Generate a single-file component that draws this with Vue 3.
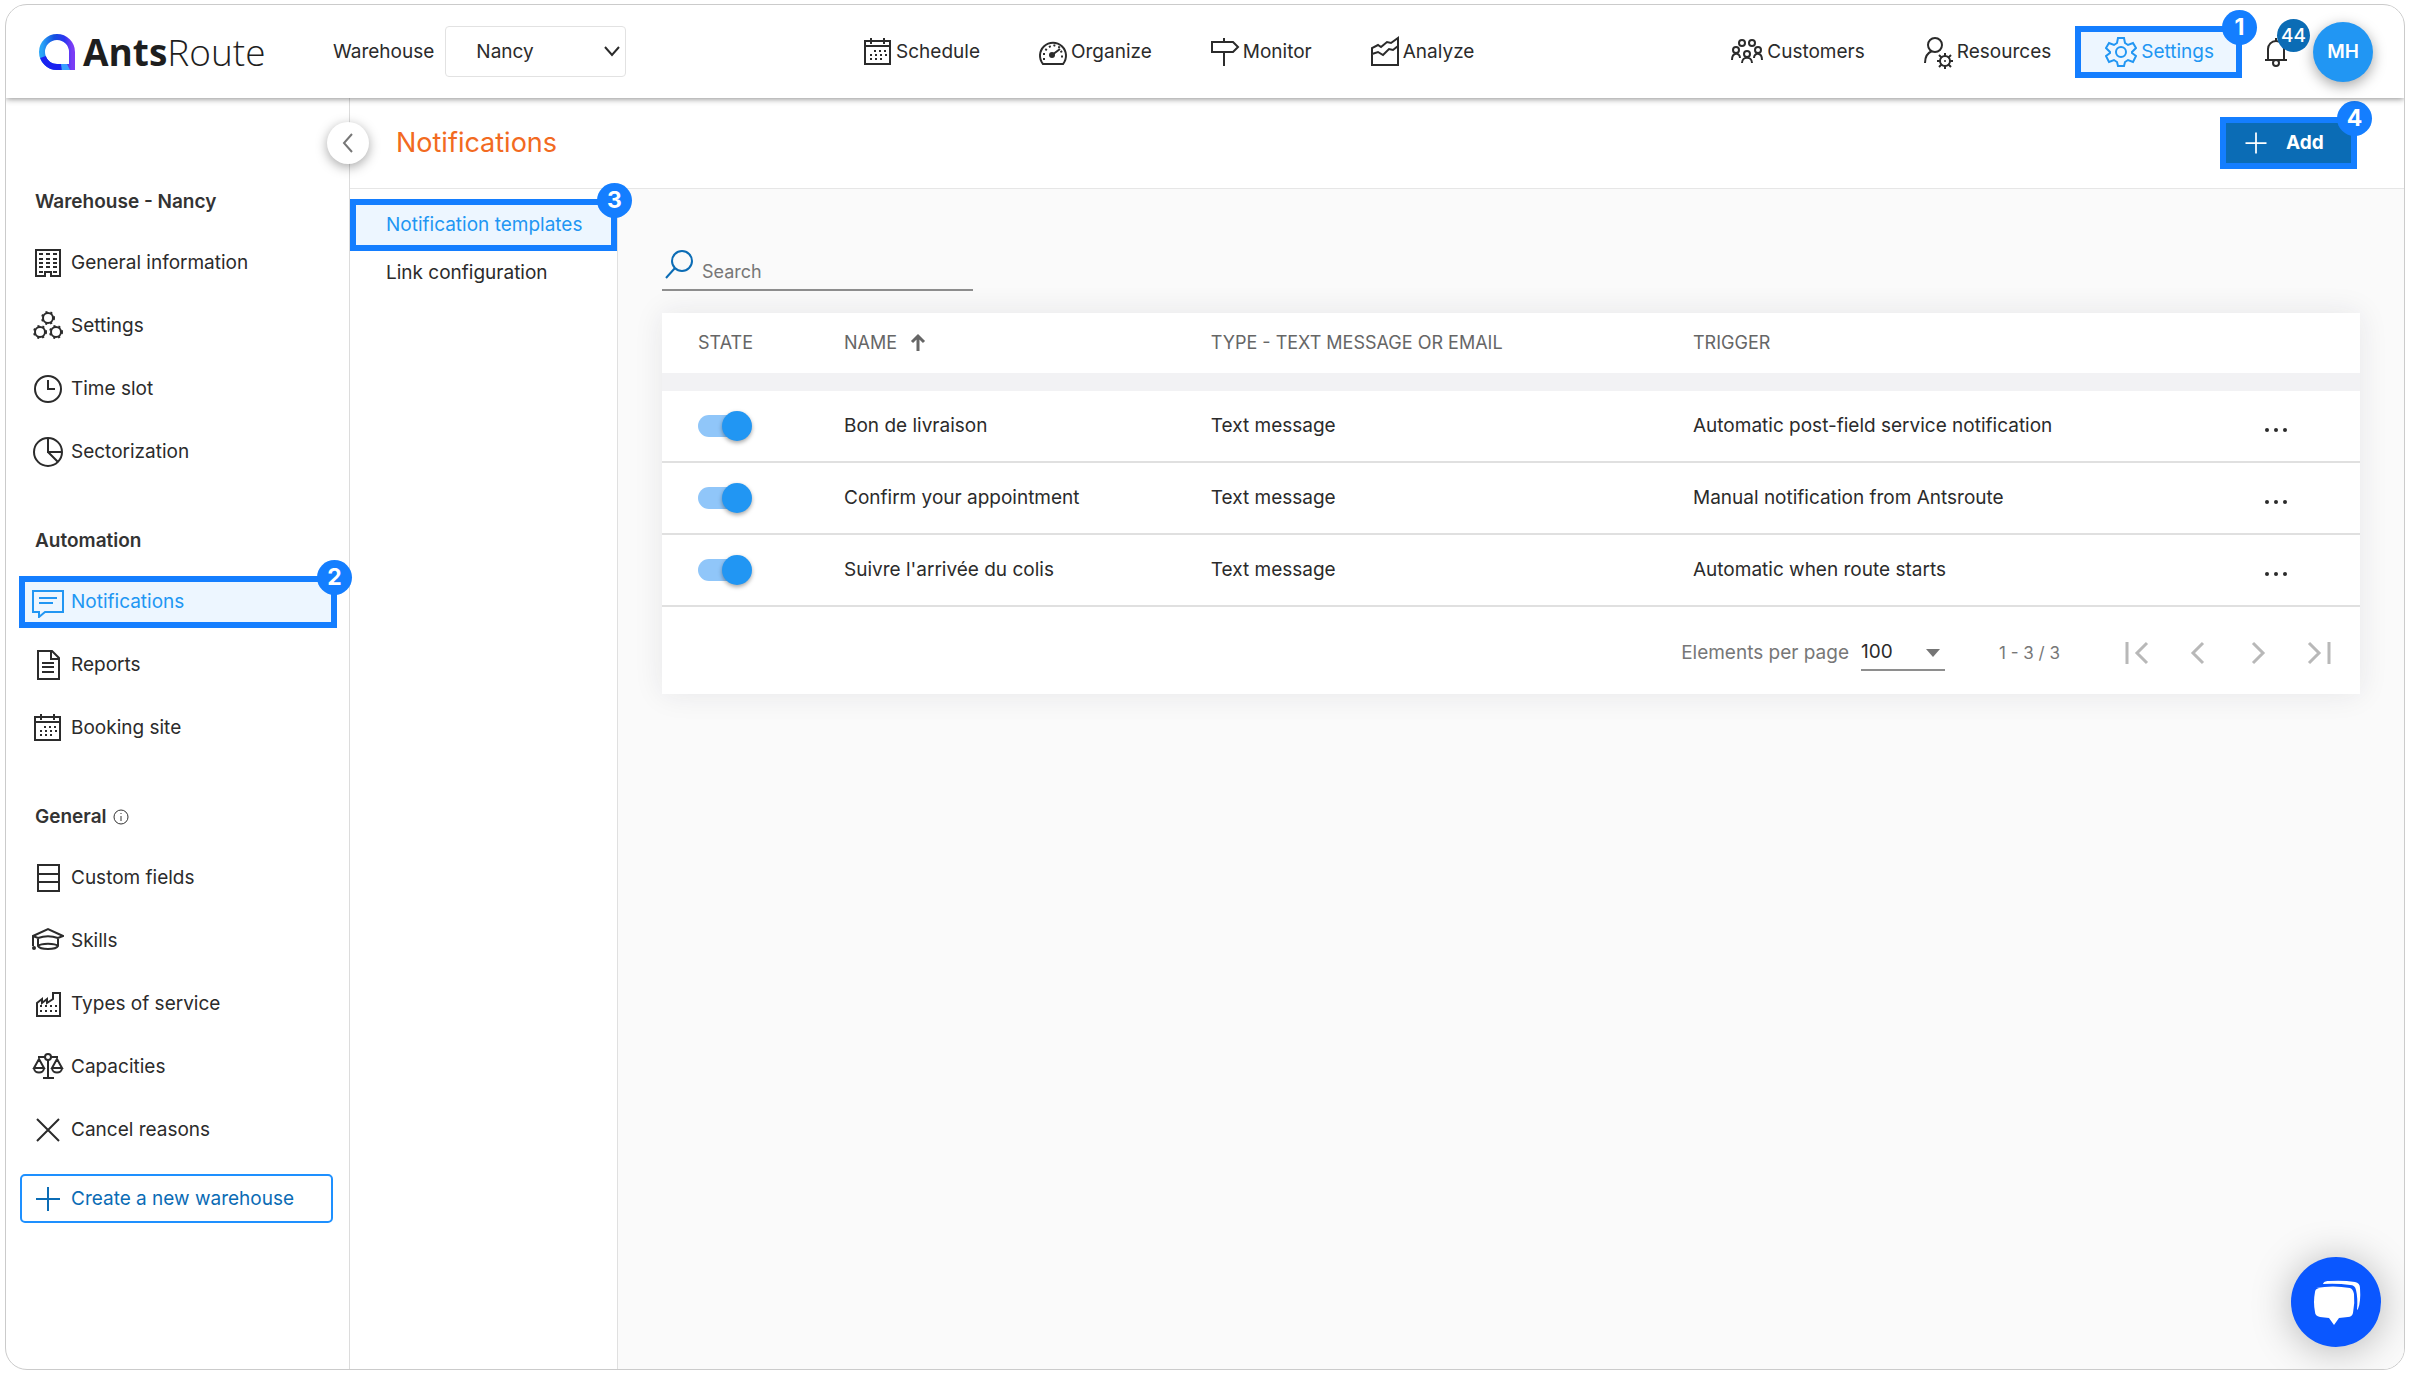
<script setup>
import { ref } from 'vue'

const icons = {
  calendar: '<path d="M3 5h25v23H3zM3 10h25M9 2v6M22 2v6"/><path class="dots" d="M12 15h15M8 19h19M8 23h14"/>',
  gauge: '<path d="M6 28a13 13 0 1 1 20 0zM15 19l8-6"/><circle class="solid" cx="15" cy="19" r="3"/><path class="dots" d="M7 24v-7l3-5 6-3 6 2 3 6v7"/>',
  sign: '<path d="M3 6h21l5 5-5 5H3zM15 2v4M15 16v14"/>',
  chart: '<path d="M3 29V12l6-3 3 2 6-5 4 1 7-5v27zM3 18l6-2 5 3 6-6 4 1 5-4"/>',
  people: '<circle cx="11" cy="7" r="3"/><circle cx="21" cy="7" r="3"/><circle cx="5" cy="14" r="3"/><circle cx="27" cy="14" r="3"/><circle cx="16" cy="18" r="3"/><path d="M1 24c0-8 8-8 8-2M23 22c0-6 8-6 8 2M11 27c0-7 10-7 10 0"/>',
  resource: '<circle cx="12" cy="9" r="7"/><path d="M9 15c-5 2-7 6-7 12"/><circle cx="22" cy="25" r="5"/><path d="M22 17v3M22 30v3M14 25h3M27 25h3M16 19l3 3M25 28l3 3M28 19l-3 3M19 28l-3 3"/><circle class="solid" cx="22" cy="25" r="1"/>',
  gear: '<circle cx="16" cy="16" r="5"/><path d="M13 2h6l1 5 3 2 5-2 3 5-4 4v1l4 3-3 6-5-2-3 2-1 4h-6l-1-4-3-2-5 2-3-6 4-3v-1l-4-4 3-5 5 2 3-2z"/>',
  building: '<path d="M4 3h24v26h-9v-4h-6v4H4z"/><path class="windows" d="M7 7h18M7 12h18M7 16h18M7 20h18M7 25h18"/>',
  gears: '<circle cx="16" cy="8" r="5"/><circle cx="8" cy="22" r="5"/><circle cx="24" cy="22" r="5"/><circle class="cog" cx="16" cy="8" r="6"/><circle class="cog" cx="8" cy="22" r="6"/><circle class="cog" cx="24" cy="22" r="6"/>',
  clock: '<circle cx="16" cy="16" r="13"/><path d="M16 7v9h7"/>',
  pie: '<circle cx="16" cy="16" r="14"/><path d="M16 2v14h14M16 16l10 10"/>',
  message: '<path d="M1 5h30v21H13l-6 5v-5H1zM7 12h18M7 17h14"/>',
  report: '<path d="M6 2h14l7 7v21H6zM19 2v8h8M10 14h12M10 18h12M10 23h12"/>',
  rows: '<path d="M6 3h21v26H6zM6 12h21M6 20h21"/>',
  cap: '<path d="M1 11l15-7 15 7-5 2c-6-2-14-2-20 0zM6 13v8c2 4 18 4 20 0v-8M6 21c3-3 17-3 20 0M1 11v10"/><circle class="solid" cx="2" cy="23" r="2"/>',
  factory: '<path d="M5 28V15l5-4v4l5-4v4l6-4V5h7v23z"/><path class="dots" d="M8 18h19M8 23h19"/>',
  scales: '<path d="M6 6h20M16 6v21M11 27h11M7 8L2 17h10zM25 8l-5 9h10zM2 17c0 6 10 6 10 0M20 17c0 6 10 6 10 0"/><circle class="hole" cx="16" cy="6" r="3"/>',
  cross: '<path d="M5 5l22 22M27 5L5 27"/>',
  plus: '<path d="M16 4v24M4 16h24"/>'
}

const warehouses = ['Nancy']
const warehouse = ref('Nancy')
const perPage = ref('100')
const search = ref('')

const mainNav = [
  { icon: 'calendar', label: 'Schedule' },
  { icon: 'gauge', label: 'Organize' },
  { icon: 'sign', label: 'Monitor' },
  { icon: 'chart', label: 'Analyze' }
]

const sections = [
  {
    title: 'Warehouse - Nancy',
    items: [
      { icon: 'building', label: 'General information' },
      { icon: 'gears', label: 'Settings' },
      { icon: 'clock', label: 'Time slot' },
      { icon: 'pie', label: 'Sectorization' }
    ]
  },
  {
    title: 'Automation',
    items: [
      { icon: 'message', label: 'Notifications', step: 2 },
      { icon: 'report', label: 'Reports' },
      { icon: 'calendar', label: 'Booking site' }
    ]
  },
  {
    title: 'General',
    info: true,
    items: [
      { icon: 'rows', label: 'Custom fields' },
      { icon: 'cap', label: 'Skills' },
      { icon: 'factory', label: 'Types of service' },
      { icon: 'scales', label: 'Capacities' },
      { icon: 'cross', label: 'Cancel reasons' }
    ]
  }
]

const rows = ref([
  { on: true, name: 'Bon de livraison', type: 'Text message', trigger: 'Automatic post-field service notification' },
  { on: true, name: 'Confirm your appointment', type: 'Text message', trigger: 'Manual notification from Antsroute' },
  { on: true, name: "Suivre l'arrivée du colis", type: 'Text message', trigger: 'Automatic when route starts' }
])

const pagerButtons = [
  { label: 'First page', path: 'M5 5v22M25 6L15 16l10 10' },
  { label: 'Previous page', path: 'M21 6L11 16l10 10' },
  { label: 'Next page', path: 'M11 6l10 10-10 10' },
  { label: 'Last page', path: 'M7 6l10 10L7 26M27 5v22' }
]
</script>

<template>
  <div class="frame">
    <header class="topbar">
      <div class="left">
        <a href="#" class="brand" aria-label="AntsRoute">
          <svg width="38" height="38" viewBox="0 0 38 38">
            <defs>
              <linearGradient id="ring" x1="0" y1="0" x2="1" y2="0">
                <stop offset="0" stop-color="#2ba6f7" />
                <stop offset=".4" stop-color="#1450e0" />
                <stop offset=".75" stop-color="#2a35f0" />
                <stop offset="1" stop-color="#7a3cf5" />
              </linearGradient>
            </defs>
            <path d="M34 34H19A15 15 0 1 1 34 19z" fill="none" stroke="url(#ring)" stroke-width="6" />
            <path d="M5 24a15 15 0 0 0 14 10h4" fill="none" stroke="#1a22f0" stroke-width="6" />
            <path d="M23 31h6l3 6h-8z" fill="#3aa0ff" stroke="none" />
          </svg>
          <span class="word"><b>Ants</b>Route</span>
        </a>
        <label for="warehouse">Warehouse</label>
        <span class="picker">
          <select id="warehouse" v-model="warehouse">
            <option v-for="w in warehouses" :key="w">{{ w }}</option>
          </select>
          <svg width="16" height="16" viewBox="0 0 16 16"><path d="M1 4l7 8 7-8" /></svg>
        </span>
      </div>

      <nav class="center">
        <a v-for="n in mainNav" :key="n.label" href="#" class="navlink">
          <svg class="icon" viewBox="0 0 32 32" v-html="icons[n.icon]"></svg>{{ n.label }}
        </a>
      </nav>

      <div class="right">
        <a href="#" class="navlink customers"><svg class="icon" viewBox="0 0 32 32" v-html="icons.people"></svg>Customers</a>
        <a href="#" class="navlink resources"><svg class="icon" viewBox="0 0 32 32" v-html="icons.resource"></svg>Resources</a>
        <a href="#" class="navlink settings marked">
          <svg class="icon" viewBox="0 0 32 32" v-html="icons.gear"></svg>Settings
          <span class="step">1</span>
        </a>
        <button class="bell" aria-label="Alerts">
          <svg width="24" height="32" viewBox="0 0 24 32">
            <path d="M1 24h22M4 24V13a8 8 0 0 1 16 0v11M12 2v3" />
            <circle cx="12" cy="27" r="3" />
          </svg>
          <span class="count">44</span>
        </button>
        <button class="avatar">MH</button>
      </div>
    </header>

    <div class="body">
      <aside class="sidebar">
        <button class="collapse" aria-label="Collapse menu">
          <svg width="12" height="20" viewBox="0 0 12 20"><path d="M10 1L2 10l8 9" /></svg>
        </button>
        <section v-for="s in sections" :key="s.title">
          <h2>
            {{ s.title }}
            <svg v-if="s.info" width="16" height="16" viewBox="0 0 16 16"><circle cx="8" cy="8" r="7" /><path d="M8 7v5M8 4v1" /></svg>
          </h2>
          <ul>
            <li v-for="i in s.items" :key="i.label">
              <a href="#" class="side" :class="{ marked: i.step }">
                <svg class="icon" viewBox="0 0 32 32" v-html="icons[i.icon]"></svg>{{ i.label }}
                <span v-if="i.step" class="step">{{ i.step }}</span>
              </a>
            </li>
          </ul>
        </section>
        <button class="create">
          <svg class="icon" viewBox="0 0 32 32" v-html="icons.plus"></svg>Create a new warehouse
        </button>
      </aside>

      <div class="content">
        <div class="titlebar">
          <h1>Notifications</h1>
          <button class="add marked">
            <svg class="icon" viewBox="0 0 32 32" v-html="icons.plus"></svg>Add
            <span class="step">4</span>
          </button>
        </div>

        <div class="panes">
          <nav class="subnav">
            <a href="#" class="sub marked">Notification templates<span class="step">3</span></a>
            <a href="#" class="sub">Link configuration</a>
          </nav>

          <main>
            <div class="search">
              <svg width="32" height="32" viewBox="0 0 32 32"><circle cx="20" cy="12" r="10" /><path d="M13 19L4 29" /></svg>
              <input v-model="search" type="text" placeholder="Search" aria-label="Search" />
            </div>

            <div class="card">
              <table>
                <thead>
                  <tr>
                    <th class="c-state">STATE</th>
                    <th class="c-name">
                      NAME
                      <svg width="16" height="18" viewBox="0 0 16 18"><path d="M8 18V3M2 9l6-6 6 6" /></svg>
                    </th>
                    <th class="c-type">TYPE - TEXT MESSAGE OR EMAIL</th>
                    <th>TRIGGER</th>
                    <th class="c-more"></th>
                  </tr>
                </thead>
                <tbody>
                  <tr v-for="r in rows" :key="r.name">
                    <td class="c-state"><input v-model="r.on" type="checkbox" class="switch" :aria-label="r.name" /></td>
                    <td>{{ r.name }}</td>
                    <td>{{ r.type }}</td>
                    <td>{{ r.trigger }}</td>
                    <td class="c-more">
                      <button class="more" aria-label="More actions">
                        <svg width="24" height="8" viewBox="0 0 24 8"><circle cx="3" cy="4" r="2" /><circle cx="12" cy="4" r="2" /><circle cx="21" cy="4" r="2" /></svg>
                      </button>
                    </td>
                  </tr>
                </tbody>
              </table>
              <div class="pager">
                <label for="perpage">Elements per page</label>
                <span class="perpage">
                  <select id="perpage" v-model="perPage">
                    <option>100</option>
                  </select>
                  <svg width="14" height="8" viewBox="0 0 14 8"><path d="M0 0h14L7 8z" /></svg>
                </span>
                <span class="range">1 - 3 / 3</span>
                <div class="steps">
                  <button v-for="b in pagerButtons" :key="b.label" :aria-label="b.label">
                    <svg width="32" height="32" viewBox="0 0 32 32"><path :d="b.path" /></svg>
                  </button>
                </div>
              </div>
            </div>
          </main>
        </div>
      </div>
    </div>

    <button class="chat" aria-label="Open chat">
      <svg width="50" height="48" viewBox="0 0 50 48">
        <path d="M5 10Q22 7 39 10Q42 11 43 16Q44 25 42 35Q41 39 37 39L28 40L23 47L18 40L9 39Q4 38 4 34Q2 24 4 14Q4 11 8 10z" />
        <path d="M12 6C13 3 16 3 18 3Q32 2 44 4Q49 5 49 10Q50 24 47 31L46 32Q47 20 45 12Q44 7 39 7Q26 5 12 6z" />
      </svg>
    </button>
  </div>
</template>

<style>
body {
  background: #fff;
}
</style>

<style scoped>
* {
  box-sizing: border-box;
}
.frame {
  position: relative;
  display: flex;
  flex-direction: column;
  min-height: calc(100vh - 8px);
  margin: 4px 4px 4px 5px;
  border: 1px solid #cbcbcb;
  border-radius: 22px;
  overflow: hidden;
  font: 19px/24px Inter, sans-serif;
  color: #2b2b2b;
}
button,
input,
select {
  font: inherit;
  color: inherit;
  margin: 0;
  padding: 0;
  border: 0;
  background: none;
}
select {
  appearance: none;
}
a {
  color: inherit;
  text-decoration: none;
}
svg {
  flex: none;
  fill: none;
  stroke: currentColor;
  stroke-width: 2;
}
.icon {
  width: 32px;
  height: 32px;
}
.icon :deep(.dots) {
  stroke-dasharray: 2 3;
}
.icon :deep(.windows) {
  stroke-dasharray: 4 3;
}
.icon :deep(.cog) {
  stroke-dasharray: 2 3;
}
.icon :deep(.solid) {
  fill: currentColor;
  stroke: none;
}
.icon :deep(.hole) {
  fill: #fff;
}
.marked {
  position: relative;
  border: 6px solid #147eff;
  background: #edf6ff;
  color: #2196f3;
}
.step {
  position: absolute;
  top: -22px;
  right: -21px;
  width: 35px;
  height: 35px;
  border-radius: 50%;
  background: #147eff;
  color: #fff;
  font-size: 23px;
  font-weight: 700;
  line-height: 35px;
  text-align: center;
}

.topbar {
  position: relative;
  z-index: 2;
  display: flex;
  align-items: center;
  height: 93px;
  background: #fff;
  box-shadow: 0 1px 6px rgba(0, 0, 0, 0.45);
}
.left {
  display: flex;
  align-items: center;
  width: 35.7%;
  padding-left: 32px;
}
.brand {
  display: flex;
  align-items: center;
  gap: 7px;
  width: 295px;
}
.word {
  font: 300 37px/40px "Open Sans", sans-serif;
  color: #1e1e1e;
}
.word b {
  font-weight: 700;
}
.picker {
  position: relative;
  margin-left: 11px;
}
.picker select {
  width: 181px;
  height: 51px;
  padding-left: 30px;
  border: 1px solid #e2e2e2;
  border-radius: 4px;
}
.picker svg {
  position: absolute;
  top: 17px;
  right: 6px;
  pointer-events: none;
}
.center {
  display: flex;
  gap: 57px;
}
.navlink {
  display: flex;
  align-items: center;
  gap: 4px;
}
.center .navlink {
  gap: 2px;
}
.right {
  display: flex;
  align-items: center;
  margin-left: auto;
  padding-right: 31px;
}
.customers {
  margin-right: 58px;
}
.resources {
  margin-right: 24px;
  gap: 2px;
}
.resources .icon {
  overflow: visible;
}
.settings {
  height: 52px;
  padding: 0 22px 0 24px;
}
.bell {
  position: relative;
  width: 24px;
  height: 32px;
  margin: 0 25px 0 22px;
}
.bell svg {
  display: block;
}
.count {
  position: absolute;
  top: -17px;
  left: 13px;
  width: 33px;
  height: 33px;
  border-radius: 50%;
  background: #0b6cb5;
  color: #fff;
  font-weight: 500;
  line-height: 33px;
}
.avatar {
  width: 60px;
  height: 60px;
  border-radius: 50%;
  background: #2196f3;
  color: #fff;
  font-weight: 600;
  box-shadow: 0 4px 14px rgba(0, 0, 0, 0.35);
}

.body {
  display: flex;
  flex: 1;
}
.sidebar {
  position: relative;
  width: 344px;
  padding: 74px 12px 24px 13px;
  border-right: 1px solid #dcdcdc;
}
.collapse {
  position: absolute;
  top: 24px;
  right: -20px;
  z-index: 1;
  width: 42px;
  height: 42px;
  border-radius: 50%;
  background: #fff;
  color: #777;
  box-shadow: 0 3px 12px rgba(0, 0, 0, 0.35);
}
.collapse svg {
  display: block;
  margin: 0 auto;
}
.sidebar section {
  margin-bottom: 28px;
}
.sidebar section:last-of-type {
  margin-bottom: 13px;
}
h2 {
  display: flex;
  align-items: center;
  gap: 6px;
  height: 59px;
  margin: 0;
  padding-left: 16px;
  font-size: 19px;
  font-weight: 600;
  color: #333;
}
h2 svg {
  stroke-width: 1;
}
ul {
  margin: 0;
  padding: 0;
  list-style: none;
}
li {
  display: flex;
  align-items: center;
  height: 63px;
}
.side {
  display: flex;
  flex: 1;
  align-items: center;
  gap: 7px;
  height: 52px;
  padding-left: 13px;
}
.side.marked {
  padding-left: 7px;
}
.create {
  display: flex;
  align-items: center;
  gap: 7px;
  width: 313px;
  height: 49px;
  margin-left: 1px;
  padding-left: 10px;
  border: 2px solid #1e90ff;
  border-radius: 5px;
  color: #0b6cb5;
}

.content {
  display: flex;
  flex: 1;
  flex-direction: column;
}
.titlebar {
  display: flex;
  align-items: center;
  justify-content: space-between;
  height: 91px;
  padding: 0 47px 0 46px;
  border-bottom: 1px solid #e6e6e6;
}
h1 {
  margin: 0;
  font-size: 27px;
  font-weight: 400;
  line-height: 32px;
  color: #f26a21;
}
.add {
  display: flex;
  align-items: center;
  gap: 16px;
  width: 137px;
  height: 52px;
  padding-left: 16px;
  background: #0b6cb5;
  color: #fff;
  font-weight: 700;
}
.add .icon {
  width: 28px;
  height: 28px;
}
.panes {
  display: flex;
  flex: 1;
}
.subnav {
  width: 268px;
  padding-top: 10px;
  border-right: 1px solid #e0e0e0;
}
.sub {
  display: flex;
  align-items: center;
  height: 44px;
  padding-left: 36px;
}
.sub.marked {
  height: 52px;
  padding-left: 30px;
}
main {
  flex: 1;
  padding: 56px 44px 0;
  background: #fafafa;
}
.search {
  display: flex;
  width: 311px;
  height: 46px;
  border-bottom: 2px solid #8e8e8e;
  font-size: 18px;
}
.search svg {
  margin-top: 4px;
  color: #0b6cb5;
}
.search input {
  flex: 1;
  min-width: 0;
  padding: 10px 0 0 8px;
  outline: none;
}
.search input::placeholder {
  color: #777;
  opacity: 1;
}
.card {
  margin-top: 22px;
  background: #f2f2f4;
  box-shadow: 0 0 28px rgba(30, 30, 60, 0.09);
}
table {
  width: 100%;
  table-layout: fixed;
  border-spacing: 0;
}
th,
td {
  padding: 0;
  background: #fff;
  text-align: left;
}
th {
  height: 60px;
  font-size: 18px;
  font-weight: 400;
  color: #666;
}
th svg {
  margin-left: 8px;
  vertical-align: -2px;
  stroke-width: 3;
}
tbody::before {
  content: "";
  display: block;
  height: 18px;
}
td {
  height: 72px;
  border-bottom: 2px solid #e0e0e0;
}
.c-state {
  width: 182px;
  padding-left: 36px;
}
.c-name {
  width: 21.6%;
}
.c-type {
  width: 28.4%;
}
.c-more {
  width: 110px;
}
.switch {
  position: relative;
  display: block;
  width: 54px;
  height: 30px;
  appearance: none;
}
.switch::before {
  content: "";
  position: absolute;
  top: 4px;
  left: 0;
  width: 50px;
  height: 22px;
  border-radius: 11px;
  background: #bbb;
}
.switch::after {
  content: "";
  position: absolute;
  top: 0;
  left: 0;
  width: 30px;
  height: 30px;
  border-radius: 50%;
  background: #fff;
  box-shadow: 0 2px 4px rgba(0, 0, 0, 0.35);
}
.switch:checked::before {
  background: #90c6f9;
}
.switch:checked::after {
  left: 24px;
  background: #2196f3;
}
.more {
  display: block;
  margin-left: 14px;
  padding-top: 8px;
}
.more svg {
  display: block;
  fill: currentColor;
  stroke: none;
}
.pager {
  display: flex;
  align-items: center;
  justify-content: flex-end;
  height: 87px;
  padding: 4px 26px 0 0;
  background: #fff;
  color: #777;
}
.perpage {
  position: relative;
  margin-left: 12px;
  color: #2b2b2b;
}
.perpage select {
  width: 84px;
  height: 36px;
  border-bottom: 2px solid #8e8e8e;
}
.perpage svg {
  position: absolute;
  top: 14px;
  right: 5px;
  fill: #757575;
  stroke: none;
  pointer-events: none;
}
.range {
  margin-left: 54px;
  font-size: 17px;
}
.steps {
  display: flex;
  gap: 28px;
  margin-left: 62px;
}
.steps button {
  width: 32px;
  height: 32px;
}
.steps svg {
  display: block;
  color: #b8b8b8;
  stroke-width: 3;
}
.chat {
  position: absolute;
  right: 23px;
  bottom: 22px;
  z-index: 3;
  display: flex;
  align-items: center;
  justify-content: center;
  width: 90px;
  height: 90px;
  border-radius: 50%;
  background: #0a57ff;
  box-shadow: 0 3px 40px rgba(0, 0, 0, 0.28);
}
.chat svg {
  fill: #fff;
  stroke: none;
}
</style>
